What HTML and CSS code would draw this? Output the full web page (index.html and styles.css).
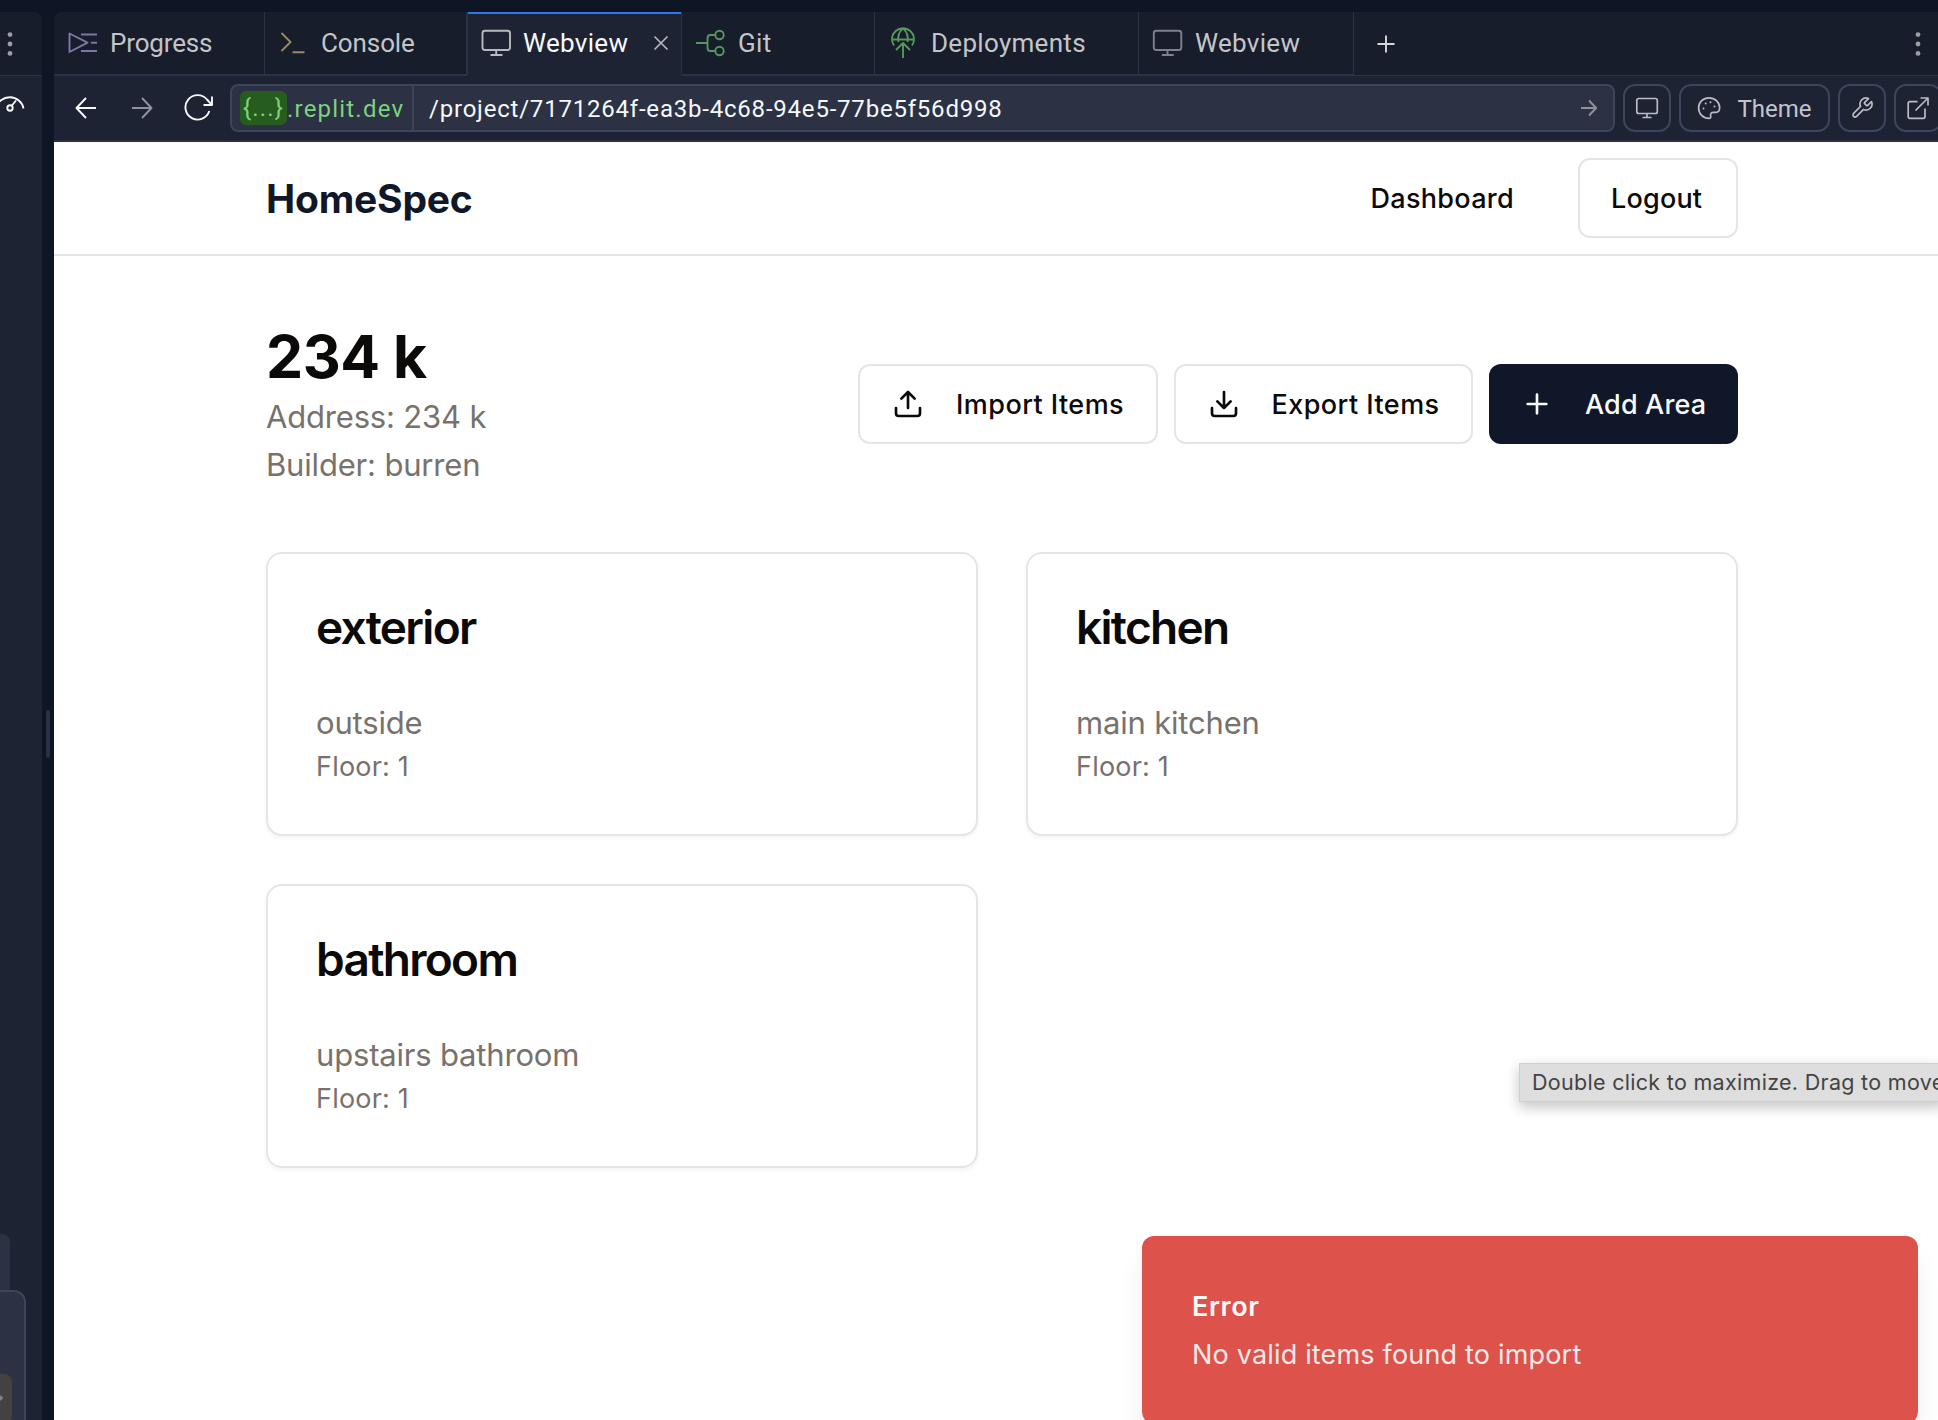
FILE: index.html
```html
<!DOCTYPE html>
<html lang="en">
<head>
<meta charset="utf-8">
<title>HomeSpec</title>
<link rel="stylesheet" href="styles.css">
</head>
<body>
<div class="workspace">
  <aside class="side-pane">
    <div class="side-tabs">
      <svg class="kebab" width="20" height="32" viewBox="0 0 20 32"><circle cx="10" cy="6.600" r="2.400"/><circle cx="10" cy="16" r="2.400"/><circle cx="10" cy="25.400" r="2.400"/></svg>
    </div>
    <div class="side-tools">
      <svg class="line light" width="28" height="32" viewBox="0 0 28 32"><path d="M-4 17a14 13.500 0 0 1 27.500 0.500M11.500 15l4.500-5.500"/><circle cx="10" cy="17" r="2.700"/></svg>
    </div>
    <div class="side-bubble"></div>
    <div class="side-composer"><div class="side-send"><svg class="line muted" width="4" height="10" viewBox="0 0 4 10"><path d="M-2 5h4M0 3l2 2-2 2"/></svg></div></div>
  </aside>
  <div class="splitter"><div class="splitter-grip"></div></div>
  <section class="main-pane">
    <nav class="tabs">
      <div class="tab tab-progress">
        <svg class="line purple" width="32" height="32" viewBox="0 0 32 32"><path d="M2.500 6.500v18.500l18-9.300zM14 7.500h16M24 15.800h6M14 24h16"/></svg>
        <span>Progress</span>
      </div>
      <div class="tab tab-console">
        <svg class="line yellow" width="32" height="32" viewBox="0 0 32 32"><path d="M3.500 6l9 9-9 9M14.500 25.300h12"/></svg>
        <span>Console</span>
      </div>
      <div class="tab tab-active">
        <svg class="line icon-bright" width="32" height="32" viewBox="0 0 32 32"><rect x="2.500" y="3.800" width="27.500" height="19.200" rx="2.500"/><path d="M16.200 23v5M10.500 28h12"/></svg>
        <span>Webview</span>
        <svg class="close line" width="16" height="16" viewBox="0 0 16 16"><path d="M1.500 1.500l13 13M14.500 1.500l-13 13"/></svg>
      </div>
      <div class="tab tab-git">
        <svg class="line green" width="32" height="32" viewBox="0 0 32 32"><path d="M1 16h11.500M20 8h-4.500q-3 0-3 3v10q0 3 3 3H20"/><circle cx="24.500" cy="8" r="4.200"/><circle cx="24.500" cy="24" r="4.200"/></svg>
        <span>Git</span>
      </div>
      <div class="tab tab-deploy">
        <svg class="line green" width="32" height="34" viewBox="0 0 32 34"><path d="M6 19.500A11 11 0 1 1 24 19.500M4 13.500h22M15 32V17M8 24l7-7 7 7M10.500 16c-.8-5 .5-10.500 4.500-13.500 4 3 5.300 8.500 4.500 13.500"/></svg>
        <span>Deployments</span>
      </div>
      <div class="tab tab-webview">
        <svg class="line muted" width="32" height="32" viewBox="0 0 32 32"><rect x="1.800" y="3.800" width="27.500" height="19.200" rx="2.500"/><path d="M15.500 23v5M9.800 28h12"/></svg>
        <span>Webview</span>
      </div>
      <div class="tabs-rest">
        <svg class="line plus" width="20" height="20" viewBox="0 0 20 20"><path d="M1.500 10h17M10 1.500v17"/></svg>
        <svg class="kebab" width="20" height="32" viewBox="0 0 20 32"><circle cx="10" cy="6.600" r="2.400"/><circle cx="10" cy="16" r="2.400"/><circle cx="10" cy="25.400" r="2.400"/></svg>
      </div>
    </nav>
    <div class="toolbar">
      <div class="nav-btn"><svg class="line light" width="32" height="32" viewBox="0 0 32 32"><path d="M26 16H6.500M16 6L6.500 16l9.500 10"/></svg></div>
      <div class="nav-btn"><svg class="line faded" width="32" height="32" viewBox="0 0 32 32"><path d="M6 16h19.500M16 6l9.500 10-9.500 10"/></svg></div>
      <div class="nav-btn nav-reload"><svg class="line light" width="32" height="32" viewBox="0 0 32 32"><path d="M25.300 19A12.200 12.200 0 1 1 23 7.500l4.500 5M28 4.500V13h-8.500"/></svg></div>
      <div class="url">
        <div class="url-host"><span class="url-badge">{...}</span><span class="url-domain">.replit.dev</span></div>
        <span class="url-path">/project/7171264f-ea3b-4c68-94e5-77be5f56d998</span>
        <svg class="line faded" width="18" height="20" viewBox="0 0 18 20"><path d="M1 10h15M9 2.500l7.200 7.500L9 17.500"/></svg>
      </div>
      <div class="tool"><svg class="line soft" width="24" height="24" viewBox="0 0 24 24"><rect x="1.800" y="2.500" width="20.500" height="15" rx="2"/><path d="M12 17.500V21.500M7.500 21.500h9"/></svg></div>
      <div class="tool tool-theme">
        <svg class="line soft" width="24" height="24" viewBox="0 0 24 24"><path d="M12 1.800C6.200 1.800 1.600 6.200 1.600 12S6.200 22.400 12 22.400c1.400 0 1.900-1 1.700-2.200-.5-2.300.3-3.900 2.700-3.900h2.600c2.200 0 3.600-1.700 3.600-4.600C22.600 6 17.800 1.800 12 1.800z"/><path class="dots" d="M6.500 12.500h.01M8.700 7.500h.01M13.500 6.300h.01M17.500 10.500h.01"/></svg>
        <span>Theme</span>
      </div>
      <div class="tool"><svg class="line soft" width="24" height="24" viewBox="0 0 24 24"><path d="M14.700 6.300a1 1 0 0 0 0 1.400l1.600 1.600a1 1 0 0 0 1.400 0l3.770-3.770a6 6 0 0 1-7.940 7.940l-6.910 6.910a2.120 2.120 0 0 1-3-3l6.910-6.910a6 6 0 0 1 7.940-7.940z"/></svg></div>
      <div class="tool"><svg class="line soft" width="24" height="24" viewBox="0 0 24 24"><path d="M19 12.500v8q0 1.800-1.800 1.800H4q-1.800 0-1.800-1.800V7.500Q2.200 5.700 4 5.700h7.500M14.500 2h7.500v7.500M22 2L9.500 14.500"/></svg></div>
    </div>
    <div class="page">
      <header class="site-header">
        <div class="container header-row">
          <div class="brand">HomeSpec</div>
          <div class="header-links">
            <a class="link">Dashboard</a>
            <button class="btn btn-logout">Logout</button>
          </div>
        </div>
      </header>
      <main class="container">
        <div class="project">
          <div class="project-info">
            <h1>234 k</h1>
            <p>Address: 234 k</p>
            <p>Builder: burren</p>
          </div>
          <div class="actions">
            <button class="btn btn-transfer"><svg class="lucide" width="32" height="32" viewBox="0 0 24 24"><path d="M21 15v4a2 2 0 0 1-2 2H5a2 2 0 0 1-2-2v-4M17 8l-5-5-5 5M12 3v12"/></svg>Import Items</button>
            <button class="btn btn-transfer"><svg class="lucide" width="32" height="32" viewBox="0 0 24 24"><path d="M21 15v4a2 2 0 0 1-2 2H5a2 2 0 0 1-2-2v-4M7 10l5 5 5-5M12 15V3"/></svg>Export Items</button>
            <button class="btn btn-primary"><svg class="lucide" width="32" height="32" viewBox="0 0 24 24"><path d="M5 12h14M12 5v14"/></svg>Add Area</button>
          </div>
        </div>
        <div class="areas">
          <article class="card"><h2>exterior</h2><p>outside</p><p class="floor">Floor: 1</p></article>
          <article class="card"><h2>kitchen</h2><p>main kitchen</p><p class="floor">Floor: 1</p></article>
          <article class="card"><h2>bathroom</h2><p>upstairs bathroom</p><p class="floor">Floor: 1</p></article>
        </div>
      </main>
    </div>
  </section>
  <div class="tooltip">Double click to maximize. Drag to move</div>
  <div class="toast"><div class="toast-title">Error</div><div class="toast-text">No valid items found to import</div></div>
</div>
</body>
</html>
```
FILE: styles.css
```css
* { box-sizing: border-box; }

body {
  margin: 0;
  font-family: Inter, "Liberation Sans", sans-serif;
  background: #0e1524;
}

h1, h2, p { margin: 0; }
svg { flex: none; display: block; }

.workspace {
  position: relative;
  display: flex;
  width: 100%;
  height: 1420px;
  padding-top: 12px;
  overflow: hidden;
}

/* icons */
.line { fill: none; stroke: currentColor; stroke-width: 1.9; stroke-linecap: butt; stroke-linejoin: round; }
.lucide { fill: none; stroke: currentColor; stroke-width: 2; stroke-linecap: round; stroke-linejoin: round; }
.kebab { fill: #9a9da4; }
.light { color: #f5f9fc; }
.faded { color: #8f929c; }
.soft { color: #b9bcc3; stroke-width: 1.7; }
.muted { color: #7e818a; }
.icon-bright { color: #b8bac0; }
.purple { color: #7c77a8; }
.yellow { color: #978b60; }
.green { color: #57965f; }
.dots { stroke-width: 2; stroke-linecap: round; }

/* left pane */
.side-pane {
  position: relative;
  flex: none;
  width: 42px;
  background: #1d2333;
  border-top-right-radius: 8px;
  overflow: hidden;
}
.side-tabs {
  height: 64px;
  padding-top: 16px;
  background: #171d2a;
  border-bottom: 1px solid #2b3245;
}
.side-tools { padding-top: 15px; }
.side-bubble {
  position: absolute;
  left: -20px;
  top: 1222px;
  width: 30px;
  height: 80px;
  background: #2c3144;
  border-radius: 8px;
}
.side-composer {
  position: absolute;
  left: -20px;
  top: 1278px;
  width: 46px;
  height: 160px;
  background: #2c3144;
  border: 2px solid #3e445b;
  border-radius: 12px;
  padding-top: 82px;
}
.side-send {
  width: 30px;
  height: 50px;
  padding: 19px 0 0 18px;
  background: #424242;
  border-radius: 8px;
}

.splitter { flex: none; width: 12px; padding: 698px 0 0 4px; }
.splitter-grip { width: 4px; height: 48px; border-radius: 2px; background: #2b3143; }

/* editor pane */
.main-pane {
  flex: 1;
  min-width: 0;
  overflow: hidden;
  border-top-left-radius: 8px;
  background: #1d2333;
}
.tabs {
  display: flex;
  height: 64px;
  font-family: Roboto, "Liberation Sans", sans-serif;
  font-size: 26px;
  letter-spacing: 0.3px;
  color: #c2c5ca;
}
.tab {
  flex: none;
  display: flex;
  align-items: center;
  gap: 11px;
  padding-left: 13px;
  background: #171d2a;
  border-right: 1px solid #2b3245;
  border-bottom: 2px solid #2b3245;
}
.tab-progress { width: 211px; letter-spacing: -0.15px; }
.tab-console { width: 202px; letter-spacing: -0.1px; }
.tab-active {
  width: 215px;
  padding: 0 12px;
  color: #f5f9fc;
  background: #1d2333;
  border-left: 1px solid #2b3245;
  border-bottom-color: #1d2333;
  box-shadow: inset 0 2px #2f74e8;
}
.close { margin-left: auto; color: #b8bac0; stroke-width: 1.6; }
.tab-git { width: 193px; }
.tab-deploy { width: 264px; }
.tab-webview { width: 215px; }
.tabs-rest {
  flex: 1;
  display: flex;
  align-items: center;
  justify-content: space-between;
  padding: 0 10px 0 22px;
  background: #171d2a;
  border-bottom: 1px solid #2b3245;
}
.plus { color: #d5d7db; }

.toolbar {
  display: flex;
  height: 66px;
  padding: 8px 0 8px 4px;
  border-bottom: 2px solid #2c2e44;
  font-family: Roboto, "Liberation Sans", sans-serif;
  font-size: 24px;
}
.nav-btn {
  flex: none;
  width: 56px;
  height: 48px;
  display: flex;
  align-items: center;
  justify-content: center;
}
.nav-reload { width: 60px; }
.url {
  flex: none;
  width: 1385px;
  height: 48px;
  display: flex;
  align-items: center;
  padding-right: 15px;
  background: #2c3144;
  border: 2px solid #3e445b;
  border-radius: 8px;
}
.url-host {
  display: flex;
  align-items: center;
  align-self: stretch;
  width: 182px;
  padding-left: 8px;
  border-right: 2px solid #3e445b;
  color: #7bd37e;
  letter-spacing: 1.2px;
}
.url-badge {
  width: 47px;
  height: 34px;
  line-height: 35px;
  text-align: center;
  background: #265c1f;
  border-radius: 6px;
}
.url-domain { padding-top: 1px; }
.url-path {
  flex: 1;
  padding: 1px 0 0 15px;
  letter-spacing: 0.79px;
  color: #f5f9fc;
}
.tool {
  flex: none;
  display: flex;
  align-items: center;
  justify-content: center;
  width: 48px;
  height: 48px;
  margin-left: 8px;
  border: 2px solid #3e445b;
  border-radius: 12px;
  color: #c2c5ca;
}
.tool-theme { width: 151px; gap: 16px; }
.tool-theme span { padding-top: 1px; }

/* previewed page */
.page { height: 1278px; background: #fff; color: #0c0a09; }
.container { width: 1472px; margin-left: 212px; }
.site-header { height: 114px; border-bottom: 2px solid #e5e5e5; }
.header-row {
  display: flex;
  align-items: center;
  justify-content: space-between;
  height: 112px;
}
.brand { font-size: 39px; font-weight: 700; letter-spacing: -0.2px; color: #101729; }
.header-links { display: flex; align-items: center; gap: 64px; }
.link { font-size: 27px; font-weight: 500; letter-spacing: 0.3px; }
.btn {
  display: flex;
  align-items: center;
  gap: 32px;
  height: 80px;
  padding: 0 0 0 32px;
  font: 500 27px Inter, "Liberation Sans", sans-serif;
  letter-spacing: 0.45px;
  white-space: nowrap;
  color: #0c0a09;
  background: #fff;
  border: 2px solid #e5e5e5;
  border-radius: 12px;
}
.btn-logout { width: 160px; padding-left: 31px; letter-spacing: 0.2px; }
.btn-transfer { width: 299.5px; }
.btn-primary {
  width: 249px;
  border: 0;
  letter-spacing: 0.15px;
  color: #f8fafc;
  background: #101729;
}

.project {
  display: flex;
  align-items: center;
  justify-content: space-between;
  padding-top: 63px;
  margin-bottom: 63px;
}
.project-info { padding-top: 2px; }
.project h1 { font-size: 59px; line-height: 72px; font-weight: 700; letter-spacing: -0.5px; }
.project p, .card p {
  font-size: 31px;
  line-height: 48px;
  letter-spacing: -0.18px;
  color: #78716c;
}
.actions { display: flex; gap: 16px; }

.areas { display: grid; grid-template-columns: 1fr 1fr; gap: 48px; }
.card {
  height: 284px;
  padding: 48px;
  border: 2px solid #e5e5e5;
  border-radius: 16px;
  box-shadow: 0 2px 4px rgba(0, 0, 0, 0.05);
}
.card h2 {
  margin-bottom: 47px;
  font-size: 46px;
  line-height: 50px;
  font-weight: 600;
  letter-spacing: -1.7px;
}
.card .floor { font-size: 27px; line-height: 40px; letter-spacing: 0.2px; }

/* overlays */
.tooltip {
  position: absolute;
  left: 1519px;
  top: 1063px;
  height: 39px;
  padding-left: 12px;
  line-height: 36px;
  font-size: 21.5px;
  letter-spacing: 0.3px;
  white-space: nowrap;
  color: #444;
  background: #dedede;
  border: 1px solid #cfcfcf;
  box-shadow: 0 5px 14px rgba(0, 0, 0, 0.24);
}
.toast {
  position: absolute;
  left: 1142px;
  top: 1236px;
  width: 776px;
  height: 188px;
  padding: 51px 50px 0;
  color: #fafafa;
  background: #de524c;
  border-radius: 12px;
  box-shadow: 0 20px 30px -6px rgba(0, 0, 0, 0.1), 0 8px 12px -8px rgba(0, 0, 0, 0.1);
}
.toast-title { margin-bottom: 8px; font-size: 27px; line-height: 40px; font-weight: 600; letter-spacing: 0.6px; }
.toast-text { font-size: 27px; line-height: 40px; letter-spacing: 0.18px; opacity: 0.9; }
```
